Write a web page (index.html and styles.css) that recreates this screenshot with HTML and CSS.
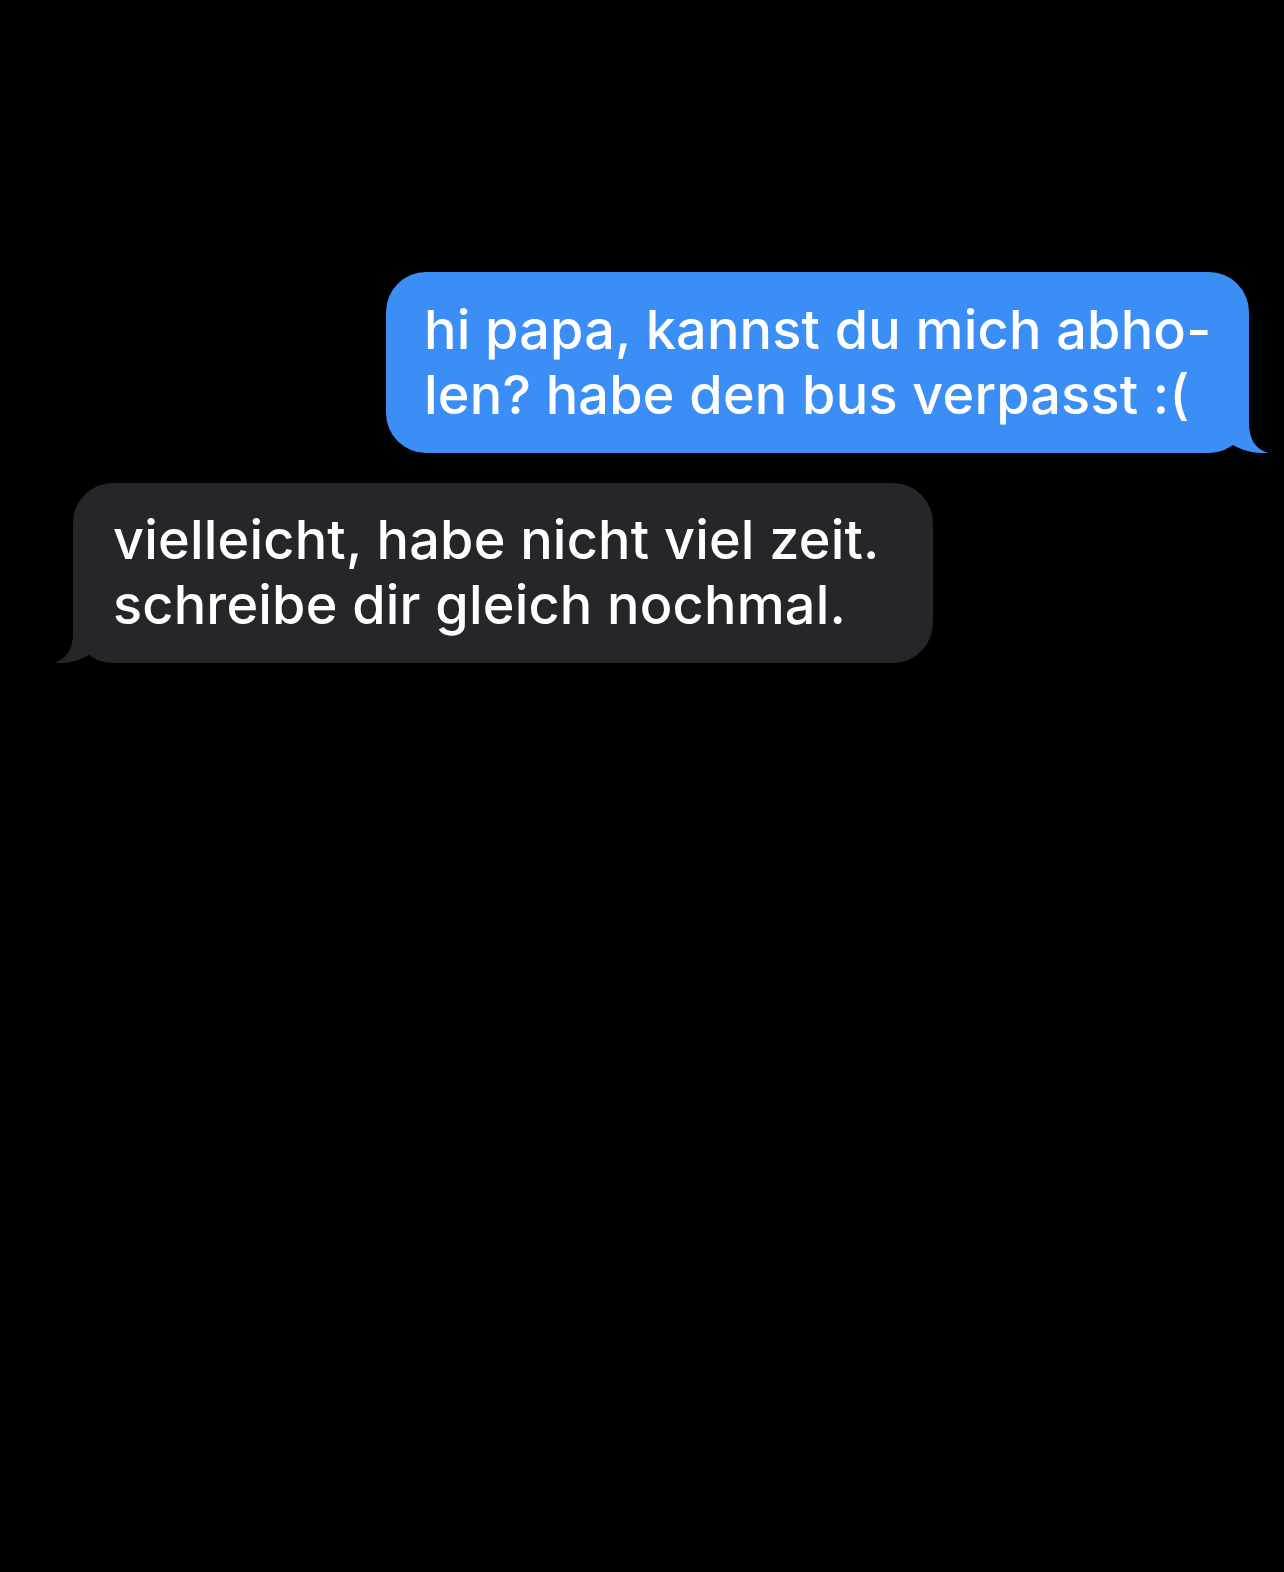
FILE: index.html
```html
<!DOCTYPE html>
<html lang="de">
<head>
<meta charset="utf-8">
<title>Nachrichten</title>
<link rel="stylesheet" href="styles.css">
</head>
<body>
<main class="thread">
  <div class="bubble bubble-sent">
    <p class="bubble-text">hi papa, kannst du mich abho-<br>len? habe den bus verpasst :(</p>
    <svg class="tail tail-sent" viewBox="0 0 60 50" width="60" height="50" aria-hidden="true">
      <path d="M0 0 H40 V20 C40 37 47 46 59 50 C47 51 32 48 21 40 C14 46 7 49 0 50 Z" fill="currentColor"/>
    </svg>
  </div>
  <div class="bubble bubble-received">
    <p class="bubble-text">vielleicht, habe nicht viel zeit.<br>schreibe dir gleich nochmal.</p>
    <svg class="tail tail-received" viewBox="0 0 60 50" width="60" height="50" aria-hidden="true">
      <path d="M0 0 H40 V20 C40 37 47 46 59 50 C47 51 32 48 21 40 C14 46 7 49 0 50 Z" fill="currentColor"/>
    </svg>
  </div>
</main>
</body>
</html>
```

FILE: styles.css
```css
html, body {
  margin: 0;
  padding: 0;
  background: #000;
}

body {
  width: 1284px;
  height: 1572px;
  overflow: hidden;
  font-family: "Inter", "Liberation Sans", sans-serif;
}

.thread {
  display: flex;
  flex-direction: column;
  gap: 30px;
  padding-top: 272px;
}

.bubble {
  position: relative;
  box-sizing: border-box;
  border-radius: 40px;
}

.bubble-text {
  margin: 0;
  color: #fff;
  font-size: 54px;
  font-weight: 500;
  letter-spacing: 0.2px;
  line-height: 65px;
  white-space: nowrap;
}

.bubble-sent {
  align-self: flex-end;
  width: 863px;
  height: 181px;
  margin-right: 35px;
  padding: 25px 0 0 38px;
  background: #3a8ef5;
  color: #3a8ef5;
}

.bubble-received {
  align-self: flex-start;
  width: 860px;
  height: 180px;
  margin-left: 73px;
  padding: 24px 0 0 40px;
  background: #26262a;
  color: #26262a;
}

.tail {
  position: absolute;
  bottom: 0;
  display: block;
}

.tail-sent {
  right: -20px;
}

.tail-received {
  left: -20px;
  transform: scaleX(-1);
}
```
